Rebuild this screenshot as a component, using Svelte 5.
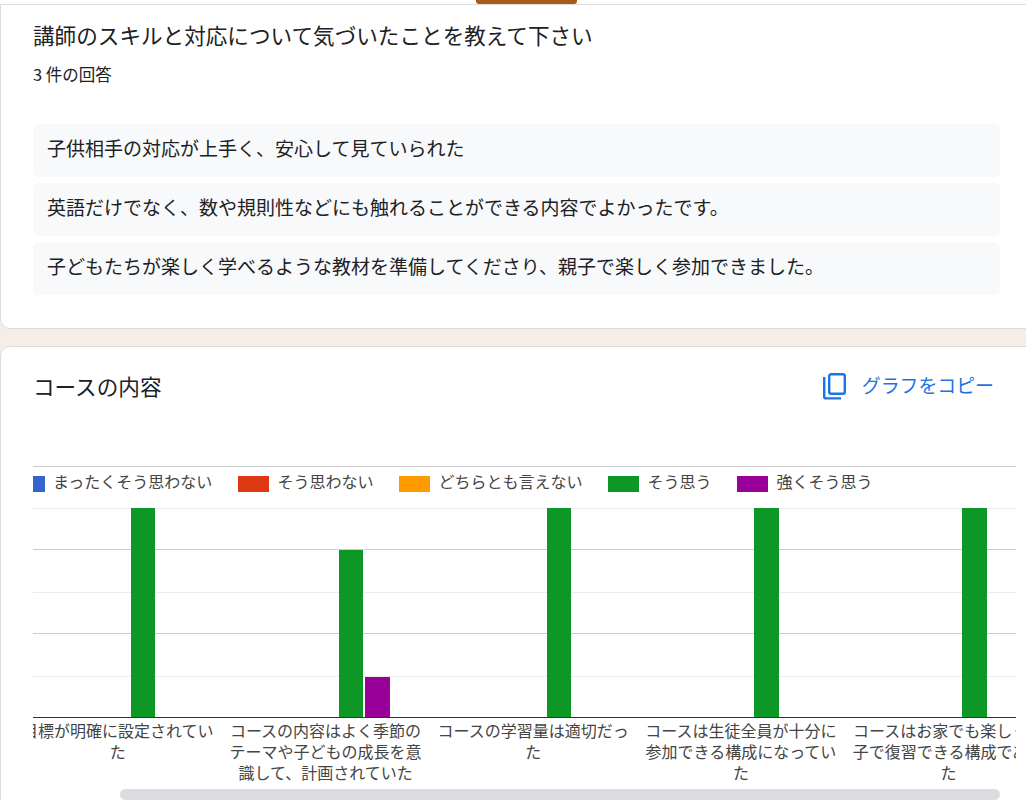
<script lang="ts">
  const answers = [
    '子供相手の対応が上手く、安心して見ていられた',
    '英語だけでなく、数や規則性などにも触れることができる内容でよかったです。',
    '子どもたちが楽しく学べるような教材を準備してくださり、親子で楽しく参加できました。'
  ];
  const legend = [
    { label: 'まったくそう思わない', color: '#3366cc' },
    { label: 'そう思わない', color: '#dc3912' },
    { label: 'どちらとも言えない', color: '#ff9900' },
    { label: 'そう思う', color: '#0d9727' },
    { label: '強くそう思う', color: '#990099' }
  ];
  const labels = [
    '目標が明確に設定されていた',
    'コースの内容はよく季節のテーマや子どもの成長を意識して、計画されていた',
    'コースの学習量は適切だった',
    'コースは生徒全員が十分に参加できる構成になっていた',
    'コースはお家でも楽しく親子で復習できる構成であった'
  ];
  // plot coordinates are relative to the chart's left edge (x=33 on the page)
  const bars = [
    { x: 98, w: 24, y: 0, color: '#0d9727' },
    { x: 306, w: 24, y: 42, color: '#0d9727' },
    { x: 332, w: 25, y: 169, color: '#990099' },
    { x: 514, w: 24, y: 0, color: '#0d9727' },
    { x: 721, w: 25, y: 0, color: '#0d9727' },
    { x: 929, w: 25, y: 0, color: '#0d9727' }
  ];
  const grid = [
    { y: 0.5, major: false },
    { y: 41.5, major: true },
    { y: 84.5, major: false },
    { y: 125.5, major: true },
    { y: 168.5, major: false }
  ];
</script>

<div class="page">
  <div class="strip"><div class="tab"></div></div>

  <section class="card first">
    <h2 class="title">講師のスキルと対応について気づいたことを教えて下さい</h2>
    <div class="count">3 件の回答</div>
    <ul class="answers">
      {#each answers as a}
        <li>{a}</li>
      {/each}
    </ul>
  </section>

  <section class="card second">
    <div class="head">
      <h2 class="title">コースの内容</h2>
      <button type="button" class="copy">
        <svg width="23" height="27" viewBox="0 0 23 27" aria-hidden="true">
          <path d="M1.2 4v19.4a2 2 0 0 0 2 2H18" fill="none" stroke="#1a73e8" stroke-width="2.4" />
          <rect x="6.2" y="1.2" width="15.6" height="19.6" rx="2" fill="none" stroke="#1a73e8" stroke-width="2.4" />
        </svg>
        <span>グラフをコピー</span>
      </button>
    </div>

    <div class="chart">
      <div class="legend">
        {#each legend as l}
          <div class="key">
            <span class="swatch" style="background:{l.color}"></span>
            <span class="key-text">{l.label}</span>
          </div>
        {/each}
      </div>

      <svg class="plot" width="983" height="210" viewBox="0 0 983 210" aria-hidden="true">
        {#each grid as g}
          <line x1="0" x2="983" y1={g.y} y2={g.y} stroke={g.major ? '#cccccc' : '#ebebeb'} />
        {/each}
        {#each bars as b}
          <rect x={b.x} y={b.y} width={b.w} height={209 - b.y} fill={b.color} />
        {/each}
        <line x1="0" x2="983" y1="209.5" y2="209.5" stroke="#333333" />
      </svg>

      <div class="labels">
        {#each labels as t}
          <div class="lab"><span>{t}</span></div>
        {/each}
      </div>
    </div>

    <div class="scroll"><div class="thumb"></div></div>
  </section>
</div>

<style>
  :global(body) { margin: 0; background: #f5ede6; }

  .page {
    height: 800px; overflow: hidden; position: relative;
    background: #f5ede6;
    font-family: "Noto Sans CJK JP", "Liberation Sans", sans-serif;
    color: #202124;
  }
  .strip { height: 4px; background: #fff; padding-left: 476px; }
  .tab { width: 101px; height: 4px; background: #a85c18; border-radius: 0 0 3px 3px; }

  .card {
    width: 1060px; box-sizing: border-box;
    background: #fff; border: 1px solid #dadce0; border-radius: 10px;
    padding-left: 32px;
  }
  .first { height: 325px; padding-top: 17px; border-top-left-radius: 0; }
  .second { margin-top: 17px; padding-top: 26px; height: 480px; position: relative; }

  .title { margin: 0; font-size: 21.6px; line-height: 26px; font-weight: 400; }
  .count { margin-top: 15px; font-size: 16.5px; line-height: 22px; }

  .answers { list-style: none; margin: 39px 0 0; padding: 0; width: 967px; display: flex; flex-direction: column; gap: 6px; }
  .answers li {
    height: 53px; box-sizing: border-box; padding: 0 14px 6px;
    display: flex; align-items: center;
    background: #f8f9fa; border-radius: 6px;
    font-size: 19px;
  }

  .head { display: flex; align-items: flex-start; justify-content: space-between; width: 961px; height: 93px; }
  .copy {
    display: flex; align-items: center; gap: 16px;
    margin: 0; padding: 0; border: 0; background: transparent;
    font: inherit; font-size: 18.9px; line-height: 27px; color: #1a73e8;
  }
  .copy span { position: relative; top: -2px; }

  .chart { width: 983px; overflow: hidden; border-top: 1px solid #cccccc; color: #444; font-size: 16px; }
  .legend { display: flex; gap: 26px; margin: 0 0 8px -19px; height: 33px; align-items: center; white-space: nowrap; }
  .key { display: flex; align-items: center; gap: 8px; }
  .key-text { padding-bottom: 5px; }
  .swatch { width: 31px; height: 16px; }

  .plot { display: block; }

  .labels { display: grid; grid-template-columns: repeat(5, 207.7px); margin-left: -19px; line-height: 21px; padding-top: 2px; }
  .lab { text-align: center; }
  .lab span { display: block; width: 192px; margin: 0 auto; }

  .scroll { position: absolute; top: 442px; left: 119px; width: 880px; height: 11px; }
  .thumb { height: 100%; background: #dadce0; border-radius: 6px; }
</style>
